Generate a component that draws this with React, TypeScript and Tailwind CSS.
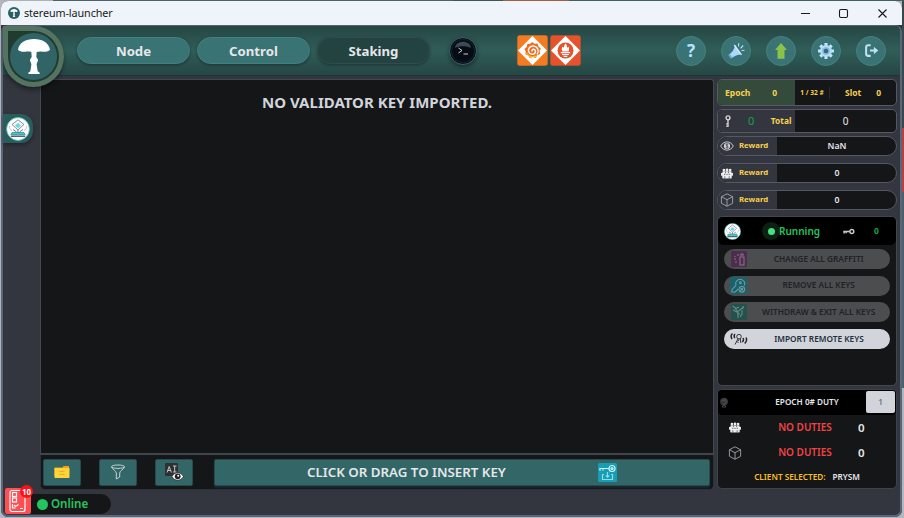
import type { ReactNode } from "react";

const FONT = "font-['Noto_Sans',sans-serif]";

function Mushroom({ className }: { className: string }) {
  return (
    <svg viewBox="0 0 96 105" className={className} fill="#fff">
      <path d="M0 32C3 12 23 0 48 0s45 12 48 32c-4 5-13 7-22 6-7-1-14 0-18 1l-1 14c1 4 5 6 5 11s-4 7-4 13l3 20 6 4v4H31v-4l6-4 3-20c0-6-4-8-4-13s4-7 5-11l-1-14c-4-1-11-2-18-1-9 1-18-1-22-6Z" />
    </svg>
  );
}

function PrysmLogo({ className }: { className: string }) {
  return (
    <svg viewBox="0 0 24 24" className={className}>
      <circle cx="12" cy="12" r="11.400" fill="#fff" stroke="#49c5c5" strokeWidth=".8" />
      <path d="M12 2.800 6 7.500 12 13 18 7.500Z" fill="#f2f5f8" stroke="#8a7f94" strokeWidth=".9" />
      <path d="m12 6-3 2.500 3 2.700 3-2.700Z" fill="#62dce0" />
      <path d="M3.500 9c-.5 2 .5 4 2.500 4.500M20.500 9c.5 2-.5 4-2.500 4.500" fill="none" stroke="#c7afb8" strokeWidth=".8" />
      <path d="m7 12.500 3.500 2.500M17 12.500 13.500 15M12 13v3" stroke="#56828c" strokeWidth="1" />
      <path d="M6 15.500h12l1.200 2.200H4.800Z" fill="#30cdd2" stroke="#27747c" strokeWidth=".6" />
      <path d="M4.800 18.400h14.400v1.700H4.800Z" fill="#56616f" />
    </svg>
  );
}

function Cube({ className }: { className: string }) {
  return (
    <svg viewBox="0 0 14 14" className={className} fill="none" stroke="#a9abb0" strokeWidth=".85" strokeLinejoin="round">
      <path d="M7 .8 12.600 3.700v6.600L7 13.200 1.400 10.300V3.700ZM1.400 3.700 7 6.700l5.600-3M7 6.700v6.500" />
    </svg>
  );
}

function Committee({ className }: { className: string }) {
  return (
    <svg viewBox="0 0 14 12" className={className} fill="#ececee">
      <circle cx="3.400" cy="2" r="1.600" /><circle cx="7" cy="1.800" r="1.600" /><circle cx="10.600" cy="2" r="1.600" />
      <path d="M1.800 3.500h10.400v3.500H1.800Z" />
      <rect x="0" y="5" width="14" height="3.700" rx="1" />
      <rect x="1.500" y="7.500" width="11" height="4.300" rx=".8" />
      <path d="M5.200 3.800v1.800M8.800 3.800v1.800M4.500 9.300V12M9.500 9.300V12M3.500 7h1.500M6.200 7h1.600M9 7h1.500" stroke="#26282d" strokeWidth=".7" />
    </svg>
  );
}

function EyeCoin({ className }: { className: string }) {
  return (
    <svg viewBox="0 0 14 12" className={className} fill="none" stroke="#d9dade">
      <path d="M.7 6C3.500.5 10.500.5 13.300 6 10.500 11.500 3.500 11.500.7 6Z" strokeWidth=".9" />
      <circle cx="7" cy="6" r="3.100" fill="#d9dade" stroke="none" />
      <path d="M8.300 4.600c-1-.9-2.500-.6-2.500.4s2.500.8 2.500 2-1.700 1.300-2.700.4M7 3.500v5" stroke="#33363e" strokeWidth=".7" />
    </svg>
  );
}

function KeyIcon({ className, color }: { className: string; color: string }) {
  return (
    <svg viewBox="0 0 14 8" className={className} fill="none" stroke={color} strokeWidth="1.700">
      <circle cx="10.800" cy="4" r="2.200" />
      <path d="M8.500 4H1M2 4v2.300M4.300 4v2" />
    </svg>
  );
}

function NavButton({ label, active }: { label: string; active?: boolean }) {
  return (
    <div
      className={`flex h-[27px] w-[113px] items-center justify-center rounded-full border pt-[2px] text-[13.200px] font-bold text-gray-200 shadow-[0_1px_3px_rgba(0,0,0,0.35)] ${
        active ? "border-[#334b4e] bg-[#234341]" : "border-[#438080] bg-[#397373]"
      }`}
    >
      {label}
    </div>
  );
}

function RoundButton({ children }: { children: ReactNode }) {
  return (
    <div className="flex size-[30px] items-center justify-center rounded-full border border-[#468181] bg-[#3a7374]">
      {children}
    </div>
  );
}

function ServiceTile({ kind }: { kind: "grafana" | "prometheus" }) {
  const orange = kind === "grafana";
  return (
    <svg viewBox="0 0 31 31" className="size-[31px]">
      <rect x=".5" y=".5" width="30" height="30" rx="2" fill={orange ? "#f47b20" : "#e6522c"} stroke={orange ? "#d96d26" : "#c94a30"} strokeWidth=".6" />
      <path d="M15.500 1 30 15.500 15.500 30 1 15.500Z" fill="#fff" />
      {orange ? (
        <g>
          <path d="m15 7 2.500 1.800 3-.2 1 2.800 2.300 2-1.200 2.700.5 2.900-2.800 1.300-1.700 2.600-3-.9-2.900.9-1.600-2.500-2.800-1.200.5-2.800-1.400-2.500 2.400-1.900.5-3 3-.3Z" fill="#f26b21" />
          <path d="m8.500 18.300 2.600 1.700 1.600 2.500 2.900-.8 3 .9 1.600-2.500c-4 2-8.700 1.200-10-2.600Z" fill="#fbc20d" />
          <path d="M20 19.500c2.500-3 1-8-3.500-8.500-3.500-.3-6 3-4.700 6 1 2.500 4.800 3 6.200 1 1.200-1.800 0-3.900-1.800-3.700-1.200.2-1.600 1.500-.8 2.300" fill="none" stroke="#fff" strokeWidth="1.400" />
        </g>
      ) : (
        <g>
          <circle cx="15.500" cy="15.500" r="8" fill="#e6522c" />
          <path d="M15.600 8.500c2 2 .6 3 2.100 4.300l.8-1.300c1 2.200.5 3.800.1 5h-6.200c-.8-1.600-.8-3.200.1-5l.9 1.200c1.200-1.400.5-2.700 2.200-4.200ZM10.800 16.900h9.400v1.300h-9.400ZM12 18.900h7v1.200h-7ZM13 20.800h5c-.8 1.600-4.200 1.600-5 0Z" fill="#fff" />
        </g>
      )}
    </svg>
  );
}

function Header() {
  return (
    <header className="flex h-[50px] shrink-0 items-center rounded-t-[5px] border-b border-[#1d3434] bg-linear-to-b from-[#264744] via-[#305d58] to-[#264744] pl-[74px] pr-[14px]">
      <nav className="flex gap-[7px]">
        <NavButton label="Node" />
        <NavButton label="Control" />
        <NavButton label="Staking" active />
      </nav>
      <div className="ml-[18.500px] flex size-[28px] items-center justify-center rounded-full border border-[#35676a] bg-[#080e16] shadow-[0_2px_4px_rgba(0,0,0,0.4)]">
        <svg viewBox="0 0 26 26" className="size-[26px]">
          <circle cx="13" cy="13" r="11.500" fill="#070b13" stroke="#172332" />
          <path d="M5 10C5.500 1.500 20.500 1.500 21 10 17 7.500 9 7.500 5 10Z" fill="#536575" opacity=".7" />
          <path d="m8.500 10 3.500 2.500-3.500 2.500M13.500 16h4.500" fill="none" stroke="#d6dce0" strokeWidth=".95" />
        </svg>
      </div>
      <div className="ml-[40.500px] flex gap-[2px]">
        <ServiceTile kind="grafana" />
        <ServiceTile kind="prometheus" />
      </div>
      <div className="ml-auto flex gap-[15px]">
        <RoundButton>
          <span className="text-[17px] font-bold leading-none text-[#b9e2ff]">?</span>
        </RoundButton>
        <RoundButton>
          <svg viewBox="0 0 18 18" className="size-[18px]">
            <path d="m1.500 13 2.500 3.500c4-3 6.500-3.800 10-4L8 3.500C7 8 5.200 10.300 1.500 13Z" fill="#a7d8ff" />
            <path d="m1.500 13 2.500 3.500 1.300-.9-2.500-3.600Z" fill="#6ba5db" />
            <path d="m7.300 3 7.200 9.800" stroke="#d3edff" strokeWidth="1.300" />
            <path d="m11.500 4.500.3-3.200M13.500 6.300l2.700-2.800M14.500 8.500l3-.3" stroke="#b9e2ff" strokeWidth="1.100" />
          </svg>
        </RoundButton>
        <RoundButton>
          <svg viewBox="0 0 14 18" className="h-[18px] w-[14px]"><path d="M7 1 13 8H10.500v8.800H3.500V8H1Z" fill="#8bc34a" /></svg>
        </RoundButton>
        <RoundButton>
          <svg viewBox="0 0 18 18" className="size-[18px]">
            <g stroke="#c4e4fa" strokeWidth="3.100">
              <path d="M9 1v16M1 9h16M3.300 3.300l11.400 11.400M14.700 3.300 3.300 14.700" />
            </g>
            <circle cx="9" cy="9" r="6" fill="#b3dcf6" />
            <circle cx="9" cy="9" r="3.700" fill="#7eb5da" />
            <circle cx="9" cy="9" r="2.200" fill="#34696f" />
          </svg>
        </RoundButton>
        <RoundButton>
          <svg viewBox="0 0 14 14" className="size-[15px]" fill="none" stroke="#c1e2f4" strokeWidth="1.900">
            <path d="M6.200 2H4C2.700 2 2 2.700 2 4v6c0 1.300.7 2 2 2h2.200M5.500 7H11" />
            <path d="m9.200 3.600 4.100 3.400-4.100 3.400Z" fill="#c1e2f4" stroke="none" />
          </svg>
        </RoundButton>
      </div>
    </header>
  );
}

function ToolButton({ children }: { children: ReactNode }) {
  return <div className="flex h-[27px] w-[38px] items-center justify-center rounded-[2px] border border-[#294a4d] bg-[#336666]">{children}</div>;
}

function InsertBar() {
  return (
    <div className="flex h-[35px] shrink-0 items-start rounded-b-[5px] border-x border-b border-[#2b3239] bg-[#151618] pl-[2.400px] pr-[2px] pt-[3.500px]">
      <div className="flex gap-[17.800px]">
        <ToolButton>
          <svg viewBox="0 0 16 14" className="h-[14px] w-[16px]">
            <path d="M.5 2.500h8l1-1.500H15v10H.5Z" fill="#f59e16" />
            <path d="M.5 3h15v9c0 .7-.3 1-1 1h-13c-.7 0-1-.3-1-1Z" fill="#ffd43b" />
            <path d="M5 6.500h5.500M5 9.300h5.500" stroke="#eeac20" strokeWidth="1.200" />
          </svg>
        </ToolButton>
        <ToolButton>
          <svg viewBox="0 0 16 16" className="size-[16px]" fill="none" stroke="#c4d2d4" strokeWidth="1">
            <ellipse cx="8" cy="2.700" rx="6.500" ry="1.700" />
            <path d="M1.500 3C2 5 6.300 7 6.300 9v6l3.400-2V9c0-2 4.300-4 4.800-6" />
          </svg>
        </ToolButton>
        <ToolButton>
          <svg viewBox="0 0 20 18" className="h-[18px] w-[20px]">
            <rect x="1" y="0" width="13" height="13" rx="1" fill="#2f3032" />
            <path d="m3 9.500 2.200-6 2.200 6M3.700 7.500h3M9 3h3.500M10.700 3v6M9 9h3.500" fill="none" stroke="#d5d5d5" strokeWidth=".9" />
            <path d="M8 13.500c2.700-5 8.500-5 11.500 0-3 5-8.800 5-11.500 0Z" fill="#fff" stroke="#222" strokeWidth=".7" />
            <circle cx="13.700" cy="13.300" r="2.900" fill="#222" /><circle cx="14.200" cy="12.700" r="1" fill="#fff" />
          </svg>
        </ToolButton>
      </div>
      <div className="ml-[21px] flex h-[27px] w-[496px] items-center rounded-[2px] border border-[#294a4d] bg-[#336666] shadow-[0_2px_2px_#1d2733]">
        <span className="w-[383px] pt-px text-center text-[13.300px] font-semibold text-gray-200">CLICK OR DRAG TO INSERT KEY</span>
        <svg viewBox="0 0 19 19" className="size-[19px]">
          <rect width="19" height="19" rx="1.500" fill="#159eb5" />
          <g fill="none" stroke="#d2f5f7" strokeWidth="1.200">
            <circle cx="14" cy="5.500" r="3" /><circle cx="14" cy="5.500" r="1" /><path d="M11 5.500H2v2.200M5 5.500v2" />
            <path d="M6 11.500H4.500v5h10v-5H13" stroke="#91dbe3" /><path d="M9.500 9v5M7.800 12.500l1.700 1.700 1.700-1.700" stroke="#91dbe3" />
          </g>
        </svg>
      </div>
    </div>
  );
}

function RewardRow({ icon, value }: { icon: ReactNode; value: string }) {
  return (
    <div className="flex h-[20px] items-stretch overflow-hidden rounded-full border border-[#545963] bg-[#151618]">
      <div className="flex w-[59px] items-center bg-[#33363e]">
        <span className="flex w-[18px] justify-center">{icon}</span>
        <span className="ml-[3px] text-[7.800px] font-bold text-[#f8cf4d]">Reward</span>
      </div>
      <span className="flex flex-1 items-center justify-center pl-px pt-px text-[8.700px] font-semibold text-gray-200">{value}</span>
    </div>
  );
}

function ActionButton({ label, icon, enabled }: { label: string; icon: ReactNode; enabled?: boolean }) {
  return (
    <div className={`flex h-[20px] items-center rounded-full pl-[6px] ${enabled ? "bg-[#d1d5db] text-[#252e3c]" : "bg-[#4c4d4f] text-[#202226]"}`}>
      <span className="flex size-[18px] items-center justify-center">{icon}</span>
      <span className="w-[148px] whitespace-nowrap text-center text-[8.300px] font-semibold">{label}</span>
    </div>
  );
}

function DutyRow({ icon }: { icon: ReactNode }) {
  return (
    <div className="flex h-[25px] items-center pl-[9px]">
      <span className="flex w-[15px] justify-center">{icon}</span>
      <span className="ml-[28px] w-[70px] text-center text-[10px] font-semibold text-[#ef4444]">NO DUTIES</span>
      <span className="ml-[18px] text-[11.500px] font-semibold">0</span>
    </div>
  );
}

function Sidebar() {
  return (
    <aside className="flex w-[180px] shrink-0 flex-col">
      <div className="flex h-[27px] overflow-hidden rounded-[5px] border border-[#545963] bg-[#151618] text-[8.500px] font-bold text-[#f8cf4d]">
        <div className="flex w-[77px] items-center justify-between bg-[#344b3c] pl-[7px] pr-[18px] pt-px"><span>Epoch</span><span>0</span></div>
        <div className="flex w-[34px] items-center justify-center text-[6.600px]">1 / 32 #</div>
        <div className="h-[12px] w-px self-center bg-[#292d32]" />
        <div className="flex flex-1 items-center justify-between pl-[15px] pr-[15px] pt-px"><span>Slot</span><span>0</span></div>
      </div>
      <div className="mt-[3px] flex h-[24px] overflow-hidden rounded-[5px] border border-[#545963] bg-[#151618]">
        <div className="flex w-[77px] items-center bg-[#33363e]">
          <svg viewBox="0 0 8 14" className="ml-[6px] h-[13px] w-[8px]" fill="none" stroke="#d2d3d6" strokeWidth="1.500"><circle cx="4" cy="3" r="2.100" /><path d="M4 5v8M4 12H2M4 9.500H2" /></svg>
          <span className="ml-[16px] text-[11px] text-[#16a34a]">0</span>
          <span className="ml-[16.500px] pt-px text-[8.400px] font-bold text-[#f8cf4d]">Total</span>
        </div>
        <span className="flex flex-1 items-center justify-center text-[10px] text-gray-200">0</span>
      </div>
      <div className="mt-[3px] flex flex-col gap-[7px]">
        <RewardRow icon={<EyeCoin className="h-[12px] w-[14px]" />} value="NaN" />
        <RewardRow icon={<Committee className="h-[11px] w-[12px]" />} value="0" />
        <RewardRow icon={<Cube className="size-[14px]" />} value="0" />
      </div>
      <section className="mt-[6px] h-[170px] rounded-[5px] border border-[#42474e] bg-[#151618]">
        <div className="flex h-[28px] items-center rounded-[5px] bg-black">
          <PrysmLogo className="ml-[6px] size-[17px]" />
          <div className="ml-[21px] flex size-[18px] items-center justify-center rounded-full bg-[#0c2013]"><span className="size-[7px] rounded-full bg-[#4ade80]" /></div>
          <span className="-ml-px w-[42px] pt-px text-[10px] font-semibold text-[#22c55e]">Running</span>
          <KeyIcon color="#c8c8cb" className="ml-[21px] h-[7px] w-[13px]" />
          <span className="ml-[19px] text-[8.500px] font-bold text-[#16a34a]">0</span>
        </div>
        <div className="mt-[4px] flex flex-col gap-[6.600px] px-[6px]">
          <ActionButton label="CHANGE ALL GRAFFITI" icon={<svg viewBox="0 0 16 16" className="size-[16px]"><rect width="16" height="16" rx="1" fill="#4d2c4d" /><g fill="none" stroke="#867386" strokeWidth="1.100"><rect x="9" y="6" width="4" height="8" /><path d="M10 5V3h2v2M3 8h2M4 11h2M7 3v2M4 5v1" /></g></svg>} />
          <ActionButton label="REMOVE ALL KEYS" icon={<svg viewBox="0 0 18 18" className="size-[17px]"><rect width="18" height="18" rx="1.500" fill="#19616b" /><g fill="none" stroke="#739ba0" strokeWidth="1.100"><path d="M6.500 8.500 2 13.500v2.300h3.500l3-3M6.500 8.500c-2-4 3.200-7.500 6.500-5.500 2.500 1.500 3 4 2 6" /><circle cx="11" cy="6" r="1" /><circle cx="12.500" cy="13" r="3" /><path d="m11 11.500 3 3M14 11.500l-3 3" /></g></svg>} />
          <ActionButton label="WITHDRAW & EXIT ALL KEYS" icon={<svg viewBox="0 0 16 16" className="size-[16px]"><rect width="16" height="16" rx="1" fill="#24514c" /><path d="M1.500 2 5 4.500 8 3M2 6l4 2 4-3 3-2M7 8v6M11 6v4l-2 3M9 10H6M4 4l2 3M12 2v3" fill="none" stroke="#678983" strokeWidth="1.100" /></svg>} />
          <ActionButton enabled label="IMPORT REMOTE KEYS" icon={<svg viewBox="0 0 18 14" className="h-[14px] w-[18px]" fill="none" stroke="#25272b" strokeWidth="1.500"><path d="M2.500 1.500C.8 3 .8 5 2 7M5 2C3.800 3.500 4 5 5 6M13 6c.8 1.500.3 3-.7 4M16 5.500c1 2 .3 4.500-1.300 6" /><g strokeWidth=".9"><circle cx="9" cy="4.700" r="2.300" /><path d="m8 6.800-3 5.700M6.500 9.500l2 1M10.300 6.500 10.800 11M9 7.500 8.300 9" /></g></svg>} />
        </div>
      </section>
      <section className="mt-[3px] h-[100px] rounded-[5px] border border-[#3e4348] bg-[#151618] text-gray-200">
        <div className="flex h-[25px] items-center rounded-[4px] bg-black">
          <svg viewBox="0 0 10 12" className="ml-px h-[11px] w-[10px]"><circle cx="5" cy="5" r="4.300" fill="#36373a" /><path d="M5 1.500 8 5 5 8.500M2.500 4h3M4 9h2l1 2H3Z" stroke="#606166" strokeWidth=".7" fill="none" /></svg>
          <span className="ml-[10px] w-[136px] text-center text-[8.200px] font-semibold">EPOCH 0# DUTY</span>
          <div className="-ml-[9px] mb-px flex h-[22px] w-[29px] items-center justify-center rounded-[2px] bg-[#d1d5db] text-[8px] font-semibold text-[#68717e]">1</div>
        </div>
        <DutyRow icon={<Committee className="h-[11px] w-[12px]" />} />
        <DutyRow icon={<Cube className="size-[14px]" />} />
        <div className="flex h-[24px] items-center justify-center gap-[7px] text-[8.200px] font-semibold"><span className="text-[#fbbf24]">CLIENT SELECTED:</span><span>PRYSM</span></div>
      </section>
    </aside>
  );
}

export default function App() {
  return (
    <div className={`relative h-[518px] w-[904px] overflow-hidden bg-[#b4b6ba] pl-px ${FONT}`}>
      <div className="flex h-px">
        <span className="w-[52px] bg-[#aeb0b2]" /><span className="w-[400px] bg-[#4b6462]" /><span className="w-[50px] bg-[#3f5654]" />
        <span className="w-[66px] bg-[#a0603e]" /><span className="flex-1 bg-[#3f6260]" />
      </div>
      <div className="flex">
        <div className="h-[516px] w-[901px] shrink-0 overflow-hidden rounded-[7px] bg-[#33363e]">
          <div className="flex h-[24px] items-center bg-[#eff3fa] pl-[7px] pr-[14px] text-[#191b20]">
            <div className="flex size-[12px] items-center justify-center rounded-full bg-[#286064]"><Mushroom className="h-[8px] w-[8px]" /></div>
            <span className="ml-[4px] text-[10.800px] tracking-[-0.01em]">stereum-launcher</span>
            <svg viewBox="0 0 88 12" className="ml-auto h-[12px] w-[88px]" fill="none" stroke="#17191c" strokeWidth="1.100">
              <path d="M1 6.500h9M78.500 2.500l8 8M86.500 2.500l-8 8" /><rect x="39.500" y="2.500" width="8" height="8" rx="1.500" />
            </svg>
          </div>
          <div className="flex h-[492px] flex-col rounded-[7px] border-2 border-t border-[#59677c] border-t-[#566275] bg-[#33363e]">
            <Header />
            <main className="flex h-[414px] pt-[3px]">
              <div className="w-[37px] shrink-0 pt-[35px]">
                <div className="flex h-[29px] w-[30px] items-center rounded-r-[12px] bg-[#2c5b5c] pl-[3px] shadow-[0_2px_4px_rgba(0,0,0,0.35)]"><PrysmLogo className="size-[24px]" /></div>
              </div>
              <div className="flex h-[411px] w-[674px] shrink-0 flex-col">
                <div className="flex h-[376px] justify-center rounded-t-[3px] border border-[#424951] border-b-2 border-b-[#3e454d] bg-[#151618] pt-[12px]">
                  <h1 className="h-[20px] text-[15px] font-bold leading-[20px] text-[#d1d5db]">NO VALIDATOR KEY IMPORTED.</h1>
                </div>
                <InsertBar />
              </div>
              <div className="w-[3px] shrink-0" />
              <Sidebar />
            </main>
            <footer className="flex h-[24px] pl-[2px] pt-[4px]">
              <div className="flex h-[20px] w-[106px] items-center rounded-r-full bg-[#151618] pl-[32px] text-[11.600px] font-semibold text-[#22c55e]">
                <span className="mr-[3px] size-[11px] shrink-0 rounded-full bg-[#22c55e]" />Online
              </div>
            </footer>
          </div>
        </div>
        <div className="flex h-[517px] flex-1 flex-col">
          <span className="h-[127px] bg-[#39494b]" /><span className="h-[64px] bg-[#b34046]" /><span className="h-[196px] bg-[#4a6264]" /><span className="flex-1 bg-[#b4b6ba]" />
        </div>
      </div>

      <div className="absolute left-[3px] top-[26px] flex size-[61px] items-center justify-center rounded-full rounded-tl-[5px] bg-[#557361] shadow-[0_3px_4px_rgba(0,0,0,0.4)]">
        <div className="flex size-[51px] items-center justify-center rounded-full rounded-tl-[2px] bg-[#203c30]">
          <div className="flex size-[47px] items-center justify-center rounded-full bg-[#306466]"><Mushroom className="h-[35px] w-[32px]" /></div>
        </div>
      </div>

      <div className="absolute left-[5px] top-[488px] size-[26px] rounded-[2px] bg-[#ff4f52]">
        <svg viewBox="0 0 26 26" className="size-[26px]" fill="none" stroke="#fff" strokeWidth="1.200">
          <path d="M7 2.500h11a2 2 0 0 1 2 2v17a2 2 0 0 1-2 2H7a2 2 0 0 1-2-2v-17a2 2 0 0 1 2-2Z" />
          <rect x="7.500" y="4.500" width="4" height="4" /><rect x="7.500" y="10" width="4" height="4" /><path d="M7.500 16v4h3M9 17l1.500 1.500 3-2M15 20.500h3" />
        </svg>
        <span className="absolute -top-[3px] left-[15px] flex size-[13px] items-center justify-center rounded-full bg-[#ff1018] text-[8px] font-bold text-white">10</span>
      </div>
    </div>
  );
}
